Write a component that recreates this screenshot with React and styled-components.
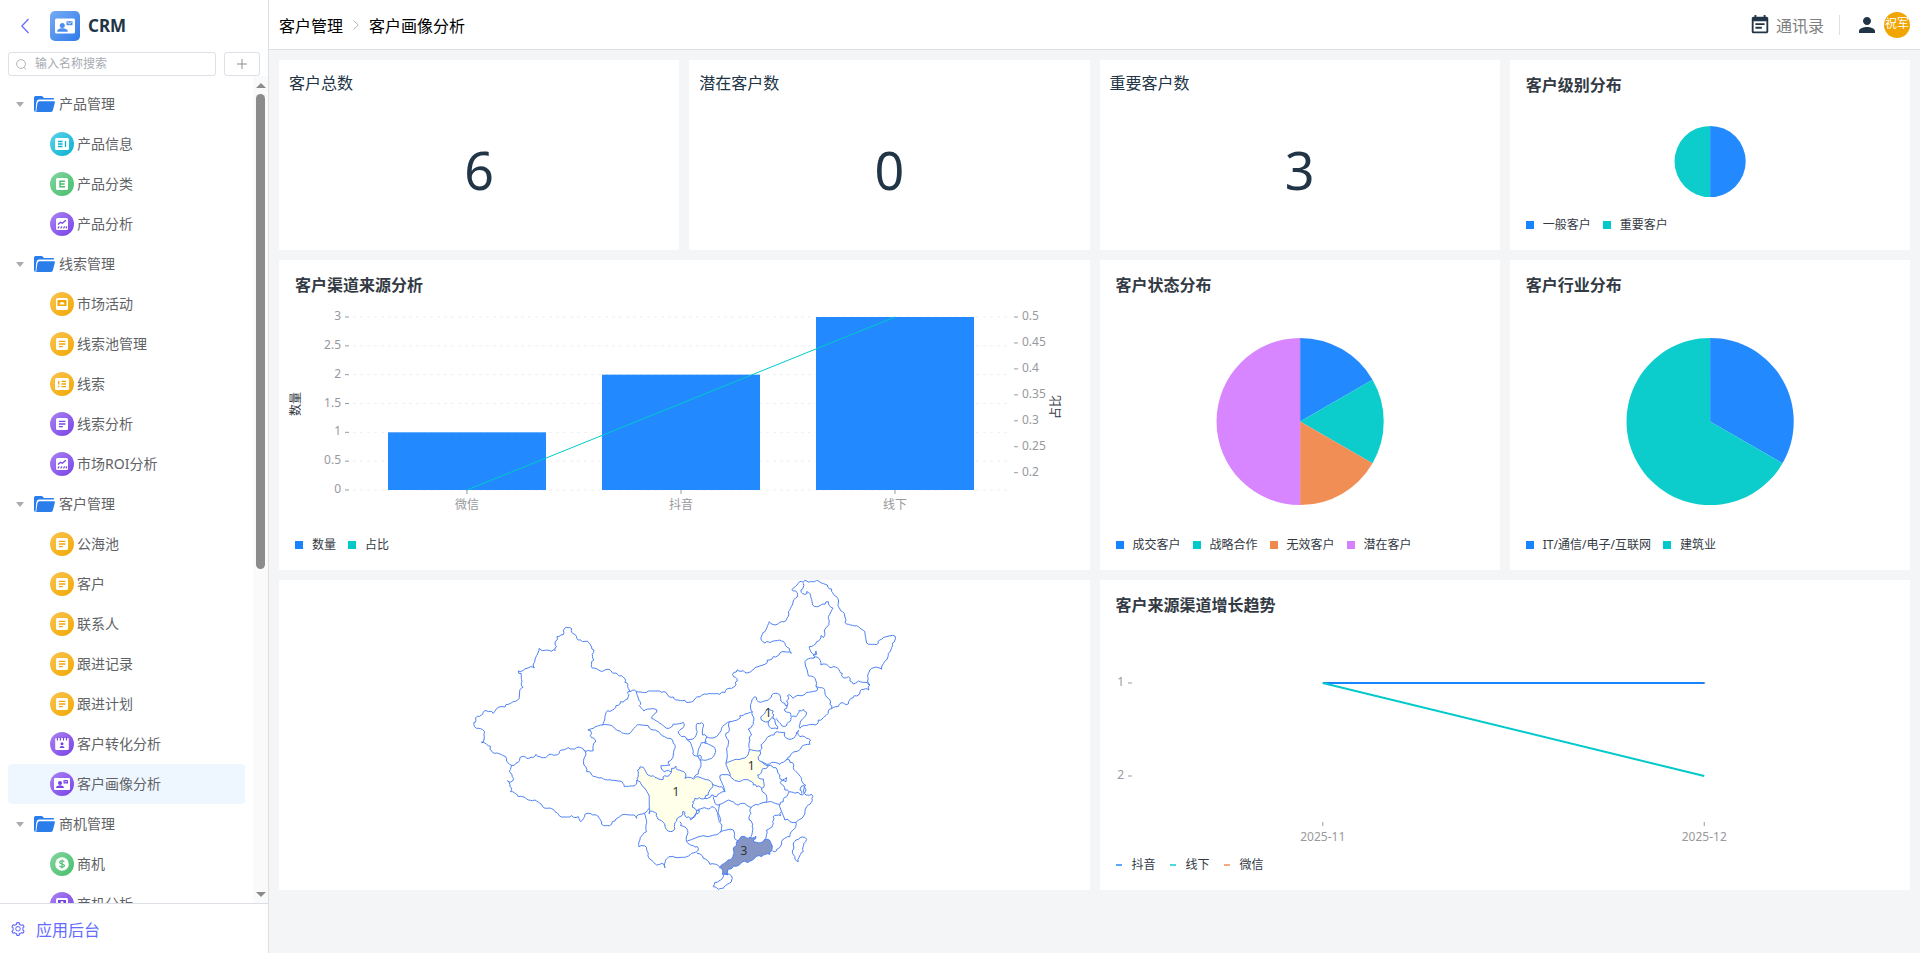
import React, { useLayoutEffect, useRef, useState } from "react";
import styled, { createGlobalStyle } from "styled-components";

// Icons
import { AiOutlineSetting } from 'react-icons/ai';
import { MdEventNote, MdPerson } from 'react-icons/md';

const blue = '#1783ff';
const teal = '#00c9c9';
const orange = '#f0884d';
const pink = '#d580ff';

const menu = [
    {
        label: '产品管理',
        children: [
            { label: '产品信息', color: 'cyan', icon: 'columns' },
            { label: '产品分类', color: 'green', icon: 'letter' },
            { label: '产品分析', color: 'purple', icon: 'trend' },
        ]
    },
    {
        label: '线索管理',
        children: [
            { label: '市场活动', color: 'yellow', icon: 'board' },
            { label: '线索池管理', color: 'yellow', icon: 'note' },
            { label: '线索', color: 'yellow', icon: 'list' },
            { label: '线索分析', color: 'purple', icon: 'note' },
            { label: '市场ROI分析', color: 'purple', icon: 'trend' },
        ]
    },
    {
        label: '客户管理',
        children: [
            { label: '公海池', color: 'yellow', icon: 'note' },
            { label: '客户', color: 'yellow', icon: 'note' },
            { label: '联系人', color: 'yellow', icon: 'note' },
            { label: '跟进记录', color: 'yellow', icon: 'note' },
            { label: '跟进计划', color: 'yellow', icon: 'note' },
            { label: '客户转化分析', color: 'purple', icon: 'calendar' },
            { label: '客户画像分析', color: 'purple', icon: 'card', active: true },
        ]
    },
    {
        label: '商机管理',
        children: [
            { label: '商机', color: 'green', icon: 'coin' },
            { label: '商机分析', color: 'purple', icon: 'screen' },
        ]
    },
];

const gradients = {
    cyan: ['#5fd3ea', '#06b0cf'],
    green: ['#84d6a0', '#45bd6c'],
    purple: ['#ab82f3', '#7743e6'],
    yellow: ['#f9c453', '#f0a800'],
};

// glyphs for the 24px round menu icons, c is the colour of the cut out parts
const glyphs = {
    columns: c => (
        <>
            <rect x="5" y="6" width="14" height="12" rx="1.5" fill="#fff" />
            <path d="M8 9.5h4.5M8 12h4.5M8 14.5h4.5M15.5 9v6" stroke={c} strokeWidth="1.3" />
        </>
    ),
    letter: c => (
        <>
            <rect x="6" y="6" width="12" height="12" rx="1.5" fill="#fff" />
            <path d="M15 9.2h-5v5.6h5M10 12h4.6" stroke={c} strokeWidth="1.4" fill="none" />
        </>
    ),
    trend: c => (
        <>
            <rect x="6" y="6" width="12" height="12" rx="1.5" fill="#fff" />
            <path d="M8 12.5l2.5-2.3 1.8 1 3.6-3" stroke={c} strokeWidth="1.3" fill="none" />
            <path d="M7.8 16.4l1.4-2M10.6 16.4l1.4-2M13.4 16.4l1.4-2M15.8 16.4l1.2-2" stroke={c} strokeWidth="1.1" />
        </>
    ),
    board: c => (
        <>
            <rect x="6" y="6" width="12" height="12" rx="1.5" fill="#fff" />
            <rect x="7.5" y="8" width="9" height="6" rx=".5" fill={c} />
            <path d="M9.5 12.5a2.5 2.5 0 0 1 5 0z" fill="#fff" />
        </>
    ),
    note: c => (
        <>
            <rect x="6" y="6" width="12" height="12" rx="1.5" fill="#fff" />
            <path d="M9 9.3h6.4M9 12h6.4M9 14.7h3.8" stroke={c} strokeWidth="1.3" />
        </>
    ),
    list: c => (
        <>
            <rect x="5" y="6" width="14" height="12" rx="1.5" fill="#fff" />
            <path d="M8.7 9v3.6M8.7 13.8v1.4M11.5 9.4H16M11.5 12H16M11.5 14.6H16" stroke={c} strokeWidth="1.3" />
        </>
    ),
    calendar: c => (
        <>
            <rect x="5.2" y="6" width="13.6" height="12" rx="1.2" fill="#fff" />
            <path d="M7.4 5.500v3M10.400 5.500v3M13.500 5.500v3M16.500 5.500v3" stroke={c} strokeWidth="1.200" />
            <circle cx="12" cy="11.800" r="1.500" fill={c} />
            <path d="M9.500 16a2.500 2 0 0 1 5 0z" fill={c} />
        </>
    ),
    card: c => (
        <>
            <rect x="4" y="6" width="16" height="12" rx="1" fill="#fff" />
            <circle cx="10" cy="11" r="2" fill={c} />
            <path d="M6 16c0-2 2-2.800 4-2.800s4 .8 4 2.800z" fill={c} />
            <path d="M13.500 8h4.500v3.500h-4.500z" fill={c} />
            <path d="M14.300 9l1.500 1 1.500-1" stroke="#fff" strokeWidth=".7" fill="none" />
        </>
    ),
    coin: c => (
        <>
            <circle cx="12" cy="12" r="6.800" fill="#fff" />
            <path d="M14.300 10.200c-.3-1-1.200-1.400-2.300-1.400-1.300 0-2.300.6-2.300 1.600 0 2.200 4.700 1 4.700 3.200 0 1-1 1.600-2.400 1.600-1.200 0-2.200-.5-2.400-1.500M12 7.500v9" stroke={c} strokeWidth="1.100" fill="none" />
        </>
    ),
    screen: c => (
        <>
            <rect x="6" y="6" width="12" height="12" rx="1.500" fill="#fff" />
            <rect x="8" y="8" width="8" height="6.500" fill={c} />
            <circle cx="12" cy="10.500" r="1.500" fill="#fff" />
        </>
    ),
};

const MenuIcon = ({ color, icon }) => {
    const [from, to] = gradients[color];
    const id = `${color}-${icon}`;
    return (
        <svg width="24" height="24" viewBox="0 0 24 24" aria-hidden="true">
            <defs>
                <linearGradient id={id} x1="0" y1="0" x2="1" y2="1">
                    <stop offset="0" stopColor={from} />
                    <stop offset="1" stopColor={to} />
                </linearGradient>
            </defs>
            <circle cx="12" cy="12" r="12" fill={`url(#${id})`} />
            {glyphs[icon](to)}
        </svg>
    )
}

const Folder = () => (
    <svg width="21" height="16" viewBox="0 0 21 16" aria-hidden="true">
        <path d="M0 1.500Q0 0 1.500 0h6.500l2 2H19q1 0 1 1v.6H5Q2.600 3.800 2.300 6.500L1.500 16Q0 16 0 14z" fill="#2b7de9" />
        <path d="M5.600 5.200H20q1.200 0 .9 1.200l-2.100 8.200Q18.400 16 17 16H2.200L3.500 7q.3-1.800 2.100-1.800z" fill="#2b7de9" />
    </svg>
)

const Sidebar = () => (
    <Aside>
        <Brand>
            <BackButton aria-label="返回">
                <svg width="8" height="16" viewBox="0 0 8 16">
                    <path d="M7.500 1L.8 8l6.700 7" stroke="#646cff" strokeWidth="1.300" fill="none" />
                </svg>
            </BackButton>
            <svg width="30" height="30" viewBox="0 0 30 30" aria-hidden="true">
                <defs>
                    <linearGradient id="logo" x1="0" y1="0" x2="1" y2="1">
                        <stop offset="0" stopColor="#77abf3" />
                        <stop offset="1" stopColor="#2f7bea" />
                    </linearGradient>
                </defs>
                <rect width="30" height="30" rx="5" fill="url(#logo)" />
                <rect x="5" y="7.500" width="20" height="15" rx="1.500" fill="#fff" />
                <circle cx="12.300" cy="14.500" r="2.500" fill="#4a8dee" />
                <path d="M7.200 20.700c0-2.500 2.500-3.400 5.100-3.400s5.500.9 5.500 3.400z" fill="#4a8dee" />
                <path d="M16.500 10.200h6v4h-6z" fill="#4a8dee" />
                <path d="M17.500 11.300l2 1.300 2-1.300" stroke="#fff" strokeWidth=".9" fill="none" />
            </svg>
            <h1>CRM</h1>
        </Brand>
        <SearchRow>
            <SearchBox>
                <svg width="11" height="11" viewBox="0 0 12 12" aria-hidden="true">
                    <circle cx="5.500" cy="5.500" r="4.800" stroke="#a8abb2" fill="none" />
                    <path d="M8.800 9l2 2.400" stroke="#a8abb2" />
                </svg>
                <input aria-label="输入名称搜索" placeholder="输入名称搜索" />
            </SearchBox>
            <AddButton aria-label="新增">
                <svg width="10" height="10" viewBox="0 0 10 10">
                    <path d="M5 0v10M0 5h10" stroke="#8a8d93" />
                </svg>
            </AddButton>
        </SearchRow>
        <TreeArea>
            <Tree>
                {
                    menu.map(group => (
                        <React.Fragment key={group.label}>
                            <GroupRow>
                                <i />
                                <Folder />
                                <span>{group.label}</span>
                            </GroupRow>
                            {
                                group.children.map(item => (
                                    <ItemRow key={item.label} href="#" $active={item.active}>
                                        <MenuIcon color={item.color} icon={item.icon} />
                                        <span>{item.label}</span>
                                    </ItemRow>
                                ))
                            }
                        </React.Fragment>
                    ))
                }
            </Tree>
            <ScrollTrack>
                <Arrow $up />
                <div><Thumb /></div>
                <Arrow />
            </ScrollTrack>
        </TreeArea>
        <AdminLink href="#">
            <AiOutlineSetting />
            应用后台
        </AdminLink>
    </Aside>
)

const Header = () => (
    <TopBar>
        <Crumbs aria-label="breadcrumb">
            <span>客户管理</span>
            <svg width="6" height="10" viewBox="0 0 6 10" aria-hidden="true">
                <path d="M.5.5L5.200 5 .5 9.500" stroke="#b4b8bf" fill="none" />
            </svg>
            <span>客户画像分析</span>
        </Crumbs>
        <Contacts href="#">
            <MdEventNote />
            通讯录
        </Contacts>
        <User>
            <svg width="16" height="16" viewBox="4 4 16 16" aria-hidden="true"><MdPerson size="24" /></svg>
            <Avatar>祝军</Avatar>
        </User>
    </TopBar>
)

const useSize = () => {
    const ref = useRef(null);
    const [size, setSize] = useState({ width: 0, height: 0 });
    useLayoutEffect(() => {
        const measure = () => setSize({ width: ref.current.clientWidth, height: ref.current.clientHeight });
        measure();
        window.addEventListener('resize', measure);
        return () => window.removeEventListener('resize', measure);
    }, []);
    return [ref, size];
}

const Panel = ({ title, legend, line, wide, children }) => (
    <Card $span={wide ? 2 : 1}>
        <h2>{title}</h2>
        <ChartBody>{children}</ChartBody>
        <Legend $line={line}>
            {
                legend.map(([label, color]) => (
                    <li key={label}>
                        <Marker $color={color} $line={line} />
                        {label}
                    </li>
                ))
            }
        </Legend>
    </Card>
)

const Pie = ({ data }) => {
    const total = data.reduce((sum, d) => sum + d[1], 0);
    const radius = 80;
    const point = v => {
        const a = v / total * Math.PI * 2;
        return `${radius * Math.sin(a)} ${-radius * Math.cos(a)}`;
    };
    let start = 0;
    return (
        <PieSvg viewBox="-100 -100 200 200">
            {
                data.map(([name, value, color]) => {
                    const from = start;
                    start += value;
                    return <path key={name} fill={color} fillOpacity=".95" d={`M0 0L${point(from)}A${radius} ${radius} 0 ${value / total > .5 ? 1 : 0} 1 ${point(start)}Z`} />
                })
            }
        </PieSvg>
    )
}

const ChannelChart = () => {
    const [ref, { width }] = useSize();
    const top = 11, bottom = 184, left = 70, right = width - 79;
    const step = (width - 168) / 3;
    const rows = [['微信', 1], ['抖音', 2], ['线下', 3]];
    const center = i => Math.floor(left + 11 + step * (i + .5));
    const y = v => bottom - v / 3 * (bottom - top);
    const y2 = v => top + (.5 - v) * 3 * (bottom - top);
    return (
        <ChartBox ref={ref}>
            {width > 0 && <svg width={width} height="100%">
                {[0, .5, 1, 1.5, 2, 2.5, 3].map(v => (
                    <g key={v}>
                        <line x1={left + 4} x2={right} y1={y(v)} y2={y(v)} stroke="#1d2129" strokeOpacity=".07" strokeDasharray="3 4" />
                        <line x1={left - 4} x2={left} y1={y(v)} y2={y(v)} stroke="#1d2129" strokeOpacity=".45" />
                        <AxisText x={left - 8} y={y(v) + 3} textAnchor="end">{v}</AxisText>
                    </g>
                ))}
                {[.5, .45, .4, .35, .3, .25, .2].map(v => (
                    <g key={v}>
                        <line x1={right + 3} x2={right + 7} y1={y2(v)} y2={y2(v)} stroke="#1d2129" strokeOpacity=".45" />
                        <AxisText x={right + 11} y={y2(v) + 3}>{v}</AxisText>
                    </g>
                ))}
                {rows.map(([name, v], i) => (
                    <g key={name}>
                        <rect x={center(i) - 79} y={y(v)} width="158" height={bottom - y(v)} fill={blue} fillOpacity=".95" />
                        <line x1={center(i)} x2={center(i)} y1={bottom} y2={bottom + 4} stroke="#1d2129" strokeOpacity=".45" />
                        <AxisText x={center(i)} y={bottom + 19} textAnchor="middle">{name}</AxisText>
                    </g>
                ))}
                <polyline points={rows.map((r, i) => `${center(i)},${y2((i + 1) / 6)}`).join(' ')} stroke={teal} fill="none" />
                <AxisTitle transform="translate(21 98) rotate(-90)" textAnchor="middle">数量</AxisTitle>
                <AxisTitle transform={`translate(${width - 30} 101) rotate(-90)`} textAnchor="middle">占比</AxisTitle>
            </svg>}
        </ChartBox>
    )
}

const GrowthChart = () => {
    const [ref, { width }] = useSize();
    const step = (width - 48) / 2;
    const x = i => 32 + step * (i + .5);
    return (
        <ChartBox ref={ref}>
            {width > 0 && <svg width={width} height="100%">
                {[[1, 57], [2, 150]].map(([v, y]) => (
                    <g key={v}>
                        <line x1="28" x2="32" y1={y} y2={y} stroke="#1d2129" strokeOpacity=".45" />
                        <AxisText x="24" y={y + 3} textAnchor="end">{v}</AxisText>
                    </g>
                ))}
                {['2025-11', '2025-12'].map((month, i) => (
                    <g key={month}>
                        <line x1={x(i)} x2={x(i)} y1="196" y2="200" stroke="#1d2129" strokeOpacity=".45" />
                        <AxisText x={x(i)} y="215" textAnchor="middle">{month}</AxisText>
                    </g>
                ))}
                <circle cx={x(1)} cy="57" r="1" fill={orange} />
                <line x1={x(0)} x2={x(1)} y1="57" y2="57" stroke={blue} strokeWidth="2" />
                <line x1={x(0)} x2={x(1)} y1="57" y2="150" stroke={teal} strokeWidth="2" />
            </svg>}
        </ChartBox>
    )
}

// Province borders, each shared border is listed once
const borders = [
    // Xinjiang
    '511,350 503,335 495,322 490,307 478,303 468,294 453,287 435,285 415,284 397,279 395,268 402,255 401,232 396,222 388,205 375,199 362,195 350,185 340,176 335,161 314,160 312,172 303,180 291,185 288,198 290,215 286,226 276,229 255,226 238,220 230,242 224,262 223,279 212,275 195,281 175,288 184,296 186,320 189,337 179,350 178,370 160,380 145,388 135,396 112,399 100,415 85,410 70,412 52,424 48,436 42,442 50,460 68,464 72,478 72,495 64,502 80,508 92,514 95,528 110,534 130,542 140,558 155,571',
    '155,571 168,565 180,548 195,545 213,547 228,538 240,545 262,544 275,538 298,535 303,525 325,518 350,518 372,525 385,526 400,527 400,512 407,501 395,488 395,475 384,465 400,460 428,450 435,430 443,407 458,405 468,392 482,380 497,374 505,365 503,355 511,350',
    // northern frontier
    '511,350 529,349 560,352 605,352 622,358 640,366 655,375 675,376 687,382 705,372 720,366 740,358 780,358 795,353 808,340 828,328 832,318 821,305 822,292 832,284 850,287 868,292 885,278 915,268 922,255 940,245 960,234 995,235 988,220 975,205 965,198 952,197 930,203 915,204 904,195 915,170 928,140 952,148 965,140 981,130 985,110 1000,78 1012,66 1007,48 996,43 1015,25 1030,22 1040,18 1070,16 1085,24 1102,30 1115,42 1130,65 1135,85 1148,110 1155,143 1190,152 1215,170 1220,204 1255,205 1265,193 1305,183 1297,205 1285,235 1280,255 1265,283 1242,278 1227,292 1225,310 1230,330 1227,345 1212,343 1200,354 1190,363 1180,368 1165,387 1150,383 1135,395 1115,401 1105,415 1090,428 1075,435 1065,450 1040,452 1020,460 1020,448 1030,430 1040,412 1030,403 1018,406 1008,425 993,428 990,440 980,452 965,452 955,440 948,430',
    // east coast
    '952,470 975,473 980,490 995,492 1010,472 1016,466 1020,485 1040,490 1052,495 1050,508 1025,515 1005,530 990,545 983,553 990,562 1002,570 1008,590 1025,610 1037,630 1033,655 1055,658 1056,670 1045,690 1035,710 1020,733 1008,742 1000,765 990,785 965,800 952,822 938,828',
    // Heilongjiang, Jilin, Liaoning
    '1030,25 1023,45 1035,58 1040,50 1052,62 1058,90 1080,92 1095,88 1105,80 1120,100 1105,130 1102,155 1093,168 1090,188 1083,182 1070,200 1048,215 1057,235 1070,238 1068,228 1060,240 1060,250 1077,250 1083,270 1105,272 1120,275 1140,290 1147,295 1150,308 1165,305 1170,318 1180,327 1195,318 1215,322 1227,330',
    '1060,250 1035,260 1042,285 1045,302 1060,305 1068,333 1085,338 1095,350 1105,370 1110,388 1115,401',
    '1068,333 1073,345 1040,352 1020,362 1000,370 993,362 983,362 980,378 982,392 973,403 985,412 993,425',
    // Hebei, Shanxi
    '982,392 975,385 962,370 952,355 935,360 930,370 895,380 890,368 880,370 875,382 877,410 880,425 880,440 865,462 875,480 870,495 868,520',
    '877,410 855,417 840,422 835,433 810,440 808,460 798,475 805,495 800,520 802,545 798,565',
    '900,527 903,510 920,490 942,480 952,470',
    '930,435 928,455 940,460 952,462 948,450 945,432 940,425',
    // Shandong, Jiangsu, Anhui
    '905,560 915,565 935,562 960,568 970,562 980,555 983,553',
    '925,572 940,578 952,585 960,600 967,615 980,608 978,620 965,617 965,628 975,645 988,650 980,665 970,680 960,690',
    '988,650 1005,655 1020,658 1033,655 1035,638 1025,633 1020,645 1025,656',
    // Hubei, Jiangxi, Zhejiang, Fujian
    '905,640 915,655 918,682 935,680 958,688 965,710 962,722 940,725 938,740 930,760 920,765 912,796',
    '918,682 895,690 875,697 855,685 835,690 820,680 805,675 780,688 765,685 760,668 770,665 795,650 782,615 780,602 810,602',
    '965,710 975,735 990,740 1008,742',
    '780,688 775,710 782,745 780,772',
    '875,697 873,715 868,735 877,755 873,785',
    // Shaanxi, Ningxia, Gansu
    '810,440 785,460 765,487 740,485 728,480 730,455 725,443 712,445 712,470 705,487 680,492 690,500 700,530 708,543 720,540 720,555 720,580 715,597 702,608',
    '740,485 735,505 765,520 760,545 730,555 715,545 720,515 725,503 740,500',
    '529,349 542,382 538,392 552,408 570,402 585,402 590,412 575,430 600,445 620,460 640,447 670,442 668,460 655,470 665,485 680,492',
    '428,450 460,455 480,468 510,475 527,455 545,450 565,452 580,465 600,475 630,490 640,505 645,520 640,540 625,560 630,570 603,572 613,590 633,590',
    // Xizang, Yunnan
    '372,525 375,545 372,570 380,590 395,600 425,608 450,614 480,618 493,635 525,632 530,615',
    '567,700 553,715 540,718 530,730 515,720 495,718 465,738 455,748 425,748 418,730 398,720 375,718 362,740 355,725 335,722 298,722 285,710 262,700 245,688 225,675 200,672 175,665 152,650 150,635 143,617 158,618 157,605 148,590 155,571',
    '553,715 560,745 560,770 540,795 537,815 560,817 565,835 575,855 590,870 605,865 615,878 622,850 645,847 680,845 695,835 711,830 712,815 700,812 680,800 682,780 680,760 662,752 660,740',
    // Guizhou, Guangxi
    '690,735 710,708 740,700 755,695 770,710 782,740',
    '682,798 705,790 735,783 780,772 800,765 820,765 823,785 835,797',
    '711,835 730,850 750,868 775,872 780,880',
    // Chongqing
    '735,670 755,660 762,665',
    '758,627 785,635 795,650',
    // Hainan and Taiwan
    '765,922 790,905 795,897 815,903 808,925 790,940 775,943 760,935 765,922',
    '1035,787 1037,800 1030,830 1015,860 1005,845 997,828 1000,810 1015,793 1035,787',
];

const provinces = [
    { name: '四川', value: 1, x: 648, y: 663, fill: '#ffffea', points: '533,585 540,576 550,577 560,595 580,602 610,613 615,602 630,598 635,580 648,573 658,585 672,590 675,610 700,612 720,607 740,614 758,627 755,640 745,660 735,670 718,668 705,670 698,680 697,690 705,700 718,706 715,715 705,725 690,730 680,728 675,712 668,710 660,725 650,738 645,762 625,768 615,750 600,735 590,715 572,708 568,717 567,660 555,640 540,620 532,610 533,585' },
    { name: '河南', value: 1, x: 874, y: 586, fill: '#ffffea', points: '798,565 830,553 860,545 868,522 900,527 895,545 905,560 925,572 910,580 905,590 893,600 895,608 910,612 912,625 905,640 890,635 880,630 870,618 845,617 820,612 810,595 798,565' },
    { name: '北京', value: 1, x: 925, y: 425, fill: '#ffffea', points: '903,425 915,415 925,400 940,408 942,420 930,435 910,438 903,425' },
    { name: '广东', value: 3, x: 852, y: 841, fill: '#8595c5', points: '855,785 870,787 888,783 880,795 890,802 912,796 930,797 937,812 935,828 930,838 905,845 885,848 870,858 855,858 840,868 820,873 805,882 803,900 787,898 783,880 787,868 805,855 820,840 820,825 830,812 832,798 840,790 855,785' },
];

// Breaks straight segments into small steps so borders look like surveyed lines
const roughen = points => {
    const list = points.split(' ').map(p => p.split(',').map(Number));
    const out = [list[0]];
    for (let i = 1; i < list.length; i++) {
        const [x1, y1] = list[i - 1];
        const [x2, y2] = list[i];
        const length = Math.hypot(x2 - x1, y2 - y1);
        const parts = Math.max(2, Math.round(length / 6));
        for (let k = 1; k < parts; k++) {
            const noise = Math.sin(x1 * 12.9 + y2 * 78.2 + k * 37.7) * 4;
            out.push([
                Math.round(x1 + (x2 - x1) * k / parts - (y2 - y1) / length * noise),
                Math.round(y1 + (y2 - y1) * k / parts + (x2 - x1) / length * noise)
            ]);
        }
        out.push([x2, y2]);
    }
    return out.map(p => p.join(',')).join(' ');
}

const ChinaMap = () => (
    <Card $span={2}>
        <MapSvg viewBox="33 15 1280 930" role="img" aria-label="客户地区分布">
            {provinces.map(p => <polygon key={p.name} points={roughen(p.points)} fill={p.fill} />)}
            {borders.map(b => <polyline key={b} points={roughen(b)} fill="none" />)}
            {provinces.map(p => <text key={p.name} x={p.x} y={p.y} textAnchor="middle">{p.value}</text>)}
        </MapSvg>
    </Card>
)

const App = () => (
    <Layout>
        <GlobalStyle />
        <Sidebar />
        <Main>
            <Header />
            <Board>
                {
                    [['客户总数', 6], ['潜在客户数', 0], ['重要客户数', 3]].map(([label, value]) => (
                        <StatCard key={label}>
                            <p>{label}</p>
                            <strong>{value}</strong>
                        </StatCard>
                    ))
                }
                <Panel title="客户级别分布" legend={[['一般客户', blue], ['重要客户', teal]]}>
                    <Pie data={[['一般客户', 3, blue], ['重要客户', 3, teal]]} />
                </Panel>
                <Panel wide title="客户渠道来源分析" legend={[['数量', blue], ['占比', teal]]}>
                    <ChannelChart />
                </Panel>
                <Panel title="客户状态分布" legend={[['成交客户', blue], ['战略合作', teal], ['无效客户', orange], ['潜在客户', pink]]}>
                    <Pie data={[['成交客户', 1, blue], ['战略合作', 1, teal], ['无效客户', 1, orange], ['潜在客户', 3, pink]]} />
                </Panel>
                <Panel title="客户行业分布" legend={[['IT/通信/电子/互联网', blue], ['建筑业', teal]]}>
                    <Pie data={[['IT/通信/电子/互联网', 2, blue], ['建筑业', 4, teal]]} />
                </Panel>
                <ChinaMap />
                <Panel wide line title="客户来源渠道增长趋势" legend={[['抖音', blue], ['线下', teal], ['微信', orange]]}>
                    <GrowthChart />
                </Panel>
            </Board>
        </Main>
    </Layout>
)

const GlobalStyle = createGlobalStyle`
    * {
        box-sizing: border-box;
    }
    body {
        margin: 0;
        font-family: "Noto Sans", "Noto Sans CJK SC", sans-serif;
        font-size: 14px;
        color: #213547;
    }
    h1, h2, p, ul {
        margin: 0;
        padding: 0;
    }
    a {
        text-decoration: none;
    }
    button, input {
        font: inherit;
    }
    svg {
        display: block;
        flex-shrink: 0;
    }
`

const Layout = styled.div`
    display: flex;
    height: 100vh;
    overflow: hidden;
    background-color: #f4f5f7;
`

const Aside = styled.aside`
    width: 269px;
    flex-shrink: 0;
    display: flex;
    flex-direction: column;
    background-color: white;
    border-right: 1px solid #dcdfe6;
`

const Brand = styled.div`
    display: flex;
    align-items: center;
    height: 52px;
    padding-left: 21px;
    h1 {
        margin-left: 8px;
        font-size: 17px;
        line-height: 24px;
        font-weight: bold;
    }
`

const BackButton = styled.button`
    margin-right: 21px;
    padding: 0;
    border: 0;
    background: none;
    cursor: pointer;
`

const SearchRow = styled.div`
    display: flex;
    gap: 8px;
    padding: 0 8px;
`

const SearchBox = styled.label`
    flex: 1;
    display: flex;
    align-items: center;
    gap: 8px;
    height: 24px;
    padding: 0 7px;
    border: 1px solid #dcdfe6;
    border-radius: 3px;
    input {
        width: 100%;
        border: 0;
        outline: 0;
        padding: 0;
        font-size: 12px;
        line-height: 20px;
        &::placeholder {
            color: #a8abb2;
        }
    }
`

const AddButton = styled.button`
    display: flex;
    align-items: center;
    justify-content: center;
    width: 36px;
    height: 24px;
    border: 1px solid #dcdfe6;
    border-radius: 3px;
    background-color: white;
`

const TreeArea = styled.div`
    flex: 1;
    min-height: 0;
    display: flex;
    overflow: hidden;
`

const Tree = styled.nav`
    flex: 1;
    padding: 8px 8px 0;
    span {
        padding-bottom: 2px;
    }
`

const GroupRow = styled.div`
    display: flex;
    align-items: center;
    height: 40px;
    padding-left: 8px;
    color: #606266;
    i {
        border: 4px solid transparent;
        border-top: 5px solid #a8abb2;
        border-bottom: 0;
        margin-right: 10px;
    }
    span {
        margin-left: 4px;
    }
`

const ItemRow = styled.a`
    display: flex;
    align-items: center;
    gap: 3px;
    height: 40px;
    padding-left: 42px;
    border-radius: 4px;
    color: #606266;
    background-color: ${p => p.$active ? '#eef7ff' : 'transparent'};
`

const ScrollTrack = styled.div`
    width: 15px;
    display: flex;
    flex-direction: column;
    background-color: #fafafa;
    > div {
        flex: 1;
        padding: 0 3px;
    }
`

const Thumb = styled.div`
    width: 9px;
    height: 60%;
    border-radius: 5px;
    background-color: #8b8b8b;
`

const Arrow = styled.span`
    height: 18px;
    display: flex;
    align-items: center;
    justify-content: center;
    &::before {
        content: '';
        border: 5px solid transparent;
        border-${p => p.$up ? 'bottom' : 'top'}-color: #8b8b8b;
        border-${p => p.$up ? 'top' : 'bottom'}-width: 0;
    }
`

const AdminLink = styled.a`
    display: flex;
    align-items: center;
    gap: 10px;
    height: 50px;
    padding: 0 10px;
    border-top: 1px solid #dcdfe6;
    color: #646cff;
    font-size: 16px;
`

const Main = styled.main`
    flex: 1;
    min-width: 0;
    display: flex;
    flex-direction: column;
`

const TopBar = styled.header`
    display: flex;
    align-items: center;
    height: 50px;
    padding: 0 10px;
    background-color: white;
    border-bottom: 1px solid #dcdfe6;
    font-size: 16px;
`

const Crumbs = styled.nav`
    display: flex;
    align-items: center;
    gap: 10px;
    margin-right: auto;
    color: #000;
`

const Contacts = styled.a`
    display: flex;
    align-items: center;
    gap: 5px;
    height: 20px;
    padding-right: 15px;
    border-right: 1px solid #dcdfe6;
    color: #808080;
    svg {
        width: 22px;
        height: 22px;
        color: #213547;
    }
`

const User = styled.div`
    display: flex;
    align-items: center;
    gap: 9px;
    padding-left: 19px;
`

const Avatar = styled.span`
    width: 26px;
    height: 26px;
    border-radius: 50%;
    background-color: #f0a500;
    color: white;
    font-size: 12px;
    line-height: 23px;
    text-align: center;
`

const Board = styled.div`
    display: grid;
    grid-template-columns: repeat(4, 1fr);
    grid-template-rows: 190px;
    grid-auto-rows: 310px;
    gap: 10px;
    padding: 10px;
`

const Card = styled.section`
    grid-column: span ${p => p.$span};
    min-width: 0;
    display: flex;
    flex-direction: column;
    background-color: white;
    h2 {
        padding: 14px 16px 10px;
        font-size: 16px;
        line-height: 22px;
        font-weight: bold;
        color: #333a44;
    }
`

const StatCard = styled.section`
    display: flex;
    flex-direction: column;
    background-color: white;
    padding: 10px;
    p {
        font-size: 16px;
        line-height: 26px;
    }
    strong {
        flex: 1;
        display: flex;
        align-items: center;
        justify-content: center;
        padding-top: 4px;
        font-size: 52px;
        line-height: 60px;
        font-weight: normal;
    }
`

const ChartBody = styled.div`
    flex: 1;
    min-height: 0;
`

const ChartBox = styled.div`
    height: 100%;
    svg {
        overflow: visible;
    }
`

const PieSvg = styled.svg`
    width: 100%;
    height: 100%;
    padding-top: 11px;
`

const Legend = styled.ul`
    display: flex;
    gap: ${p => p.$line ? '14px' : '12px'};
    padding: 10px 16px 16px;
    list-style: none;
    font-size: 12px;
    line-height: 18px;
    color: #333a44;
    li {
        display: flex;
        align-items: center;
        gap: ${p => p.$line ? '10px' : '9px'};
    }
`

const Marker = styled.span`
    width: ${p => p.$line ? '6px' : '8px'};
    height: ${p => p.$line ? '2px' : '8px'};
    background-color: ${p => p.$color};
    opacity: ${p => p.$line ? .7 : 1};
`

const AxisText = styled.text`
    font-size: 12px;
    fill: #97999c;
`

const AxisTitle = styled.text`
    font-size: 12px;
    fill: #333a44;
`

const MapSvg = styled.svg`
    width: 100%;
    height: 310px;
    polygon, polyline {
        stroke: #4c80f4;
        stroke-width: 3px;
        stroke-linejoin: round;
    }
    text {
        font-size: 36px;
        fill: #333;
    }
`

export default App;
